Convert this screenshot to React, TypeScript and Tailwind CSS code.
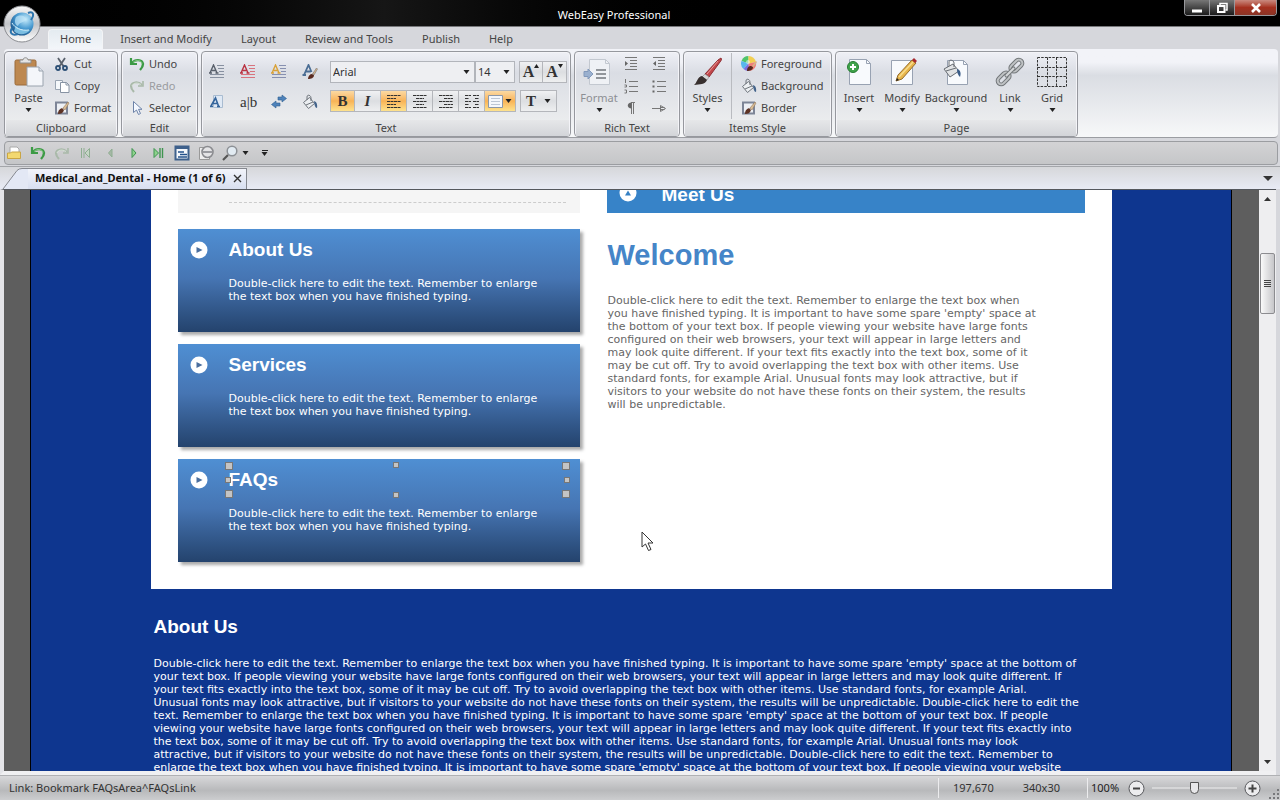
import type { ReactNode } from 'react';

const PLACEHOLDER_LINES = [
  'Double-click here to edit the text. Remember to enlarge the text box when',
  "you have finished typing. It is important to have some spare 'empty' space at",
  'the bottom of your text box. If people viewing your website have large fonts',
  'configured on their web browsers, your text will appear in large letters and',
  'may look quite different. If your text fits exactly into the text box, some of it',
  'may be cut off. Try to avoid overlapping the text box with other items. Use',
  'standard fonts, for example Arial. Unusual fonts may look attractive, but if',
  'visitors to your website do not have these fonts on their system, the results',
  'will be unpredictable.',
];

const ABOUT_LINES = [
  "Double-click here to edit the text. Remember to enlarge the text box when you have finished typing. It is important to have some spare 'empty' space at the bottom of",
  'your text box. If people viewing your website have large fonts configured on their web browsers, your text will appear in large letters and may look quite different. If',
  'your text fits exactly into the text box, some of it may be cut off. Try to avoid overlapping the text box with other items. Use standard fonts, for example Arial.',
  'Unusual fonts may look attractive, but if visitors to your website do not have these fonts on their system, the results will be unpredictable. Double-click here to edit the',
  "text. Remember to enlarge the text box when you have finished typing. It is important to have some spare 'empty' space at the bottom of your text box. If people",
  'viewing your website have large fonts configured on their web browsers, your text will appear in large letters and may look quite different. If your text fits exactly into',
  'the text box, some of it may be cut off. Try to avoid overlapping the text box with other items. Use standard fonts, for example Arial. Unusual fonts may look',
  'attractive, but if visitors to your website do not have these fonts on their system, the results will be unpredictable. Double-click here to edit the text. Remember to',
  "enlarge the text box when you have finished typing. It is important to have some spare 'empty' space at the bottom of your text box. If people viewing your website",
];

function Lines({ lines }: { lines: string[] }) {
  return (
    <>
      {lines.map((line, i) => (
        <span key={i} className="block whitespace-nowrap">
          {line}
        </span>
      ))}
    </>
  );
}

/* ---------- icons ---------- */

function Icon({ size = 16, children }: { size?: number; children: ReactNode }) {
  return (
    <svg width={size} height={size} viewBox={`0 0 ${size} ${size}`} fill="none" className="shrink-0" aria-hidden="true">
      {children}
    </svg>
  );
}

function Caret() {
  return (
    <svg width="7" height="4" viewBox="0 0 7 4" className="shrink-0" aria-hidden="true">
      <path d="M0.5 0h6L3.5 4z" fill="#222" />
    </svg>
  );
}

const PasteIcon = () => (
  <Icon size={32}>
    <rect x="2" y="4" width="21" height="25" rx="1.5" fill="#bd8850" stroke="#9a6b3b" />
    <path d="M7 7V4h3c0-3 5-3 5 0h3v3z" fill="#e4e4e4" stroke="#8d8d8d" />
    <path d="M14 11h12l4 4v15H14z" fill="#f4f6fa" stroke="#9aa3ae" />
    <path d="M26 11v4h4" fill="#dde3ec" stroke="#9aa3ae" />
  </Icon>
);
const CutIcon = () => (
  <Icon>
    <path d="M4 2l6 9M11 2L5 11" stroke="#59616c" strokeWidth="1.8" />
    <circle cx="4" cy="12" r="2" stroke="#2d5076" strokeWidth="1.8" />
    <circle cx="11" cy="12" r="2" stroke="#2d5076" strokeWidth="1.8" />
  </Icon>
);
const CopyIcon = () => (
  <Icon>
    <path d="M1.500 2.500h7v9h-7z" fill="#f5f8fb" stroke="#9aa5b3" />
    <path d="M6.500 4.500h6l2.500 2.500v7.500H6.500z" fill="#fff" stroke="#8793a3" />
    <path d="M12 4.500V7h3" stroke="#8793a3" />
  </Icon>
);
const FormatPainterIcon = () => (
  <Icon>
    <rect x="2" y="2.500" width="11" height="11" fill="#edf0f5" stroke="#7d8597" strokeWidth="2" />
    <path d="M4 14c0-4 2-5 4-6l2 2c-1 3-3 4-6 4z" fill="#5d3325" />
    <path d="M9 8l5-6 1 1-4 7z" fill="#d9bd96" stroke="#96795a" strokeWidth="0.6" />
  </Icon>
);
const UndoIcon = () => (
  <Icon>
    <path d="M2 2v6h6" stroke="#3c9a45" strokeWidth="2.200" />
    <path d="M3 7c3-4 10-4 11 1 0 3-2 5-3 6" stroke="#3c9a45" strokeWidth="2.400" />
    <path d="M4 6.500c3-3 8-3 9 1" stroke="#97d492" strokeWidth="0.8" />
  </Icon>
);
const RedoIcon = () => (
  <Icon>
    <path d="M14 3v5H9" stroke="#a9b9a9" strokeWidth="1.6" />
    <path d="M13 7C9 3 3 4 2 8c0 3 1 4 3 6" stroke="#a9b9a9" strokeWidth="2.200" />
    <path d="M12 6.500C8 4 4 5 3 8" stroke="#e3ebe3" strokeWidth="0.8" />
  </Icon>
);
const SelectorIcon = () => (
  <Icon>
    <path d="M4.500 1.500v11l3-2.500 2 4.500 2-1-2-4.200h3.500z" fill="#f4f8ff" stroke="#6d83a8" />
  </Icon>
);

function StyledTextIcon({ color, letter }: { color: string; letter: string }) {
  return (
    <Icon>
      <path d="M8 1.500h7M9 4.500h6M10 7.500h5M1 10.500h14M1 13.500h14" stroke={color} />
      <path d="M1 9L4.500 1 8 9M2.500 6.500h4M0 9h3M6.500 9h3" stroke={letter} strokeWidth="1.400" />
    </Icon>
  );
}

const BrushTextIcon = () => (
  <Icon>
    <path d="M2 11L6.500 1l3 7M3.500 7.500h5M0.500 11H4" stroke="#4a6d94" strokeWidth="1.8" />
    <path d="M6 15c0-3 2-5 4-5l2 1c0 3-3 4-6 4z" fill="#5a2a20" />
    <path d="M10.500 10l4-6 1 1-3.500 6z" fill="#d8b48a" stroke="#777" strokeWidth="0.6" />
  </Icon>
);
const TextBoxIcon = () => (
  <Icon>
    <path d="M4.500 1.500h9v12h-9z" fill="#dfe9f5" stroke="#a9bcd1" />
    <path d="M2 12L6.500 4l3 8M3.500 9.500h5M1 12.500h3M8 12.500h3" stroke="#35659c" strokeWidth="1.600" />
  </Icon>
);
const SwapIcon = () => (
  <Icon>
    <path d="M15.500 4.500L11 1v2H7v3h4v2zM0.500 10.500L5 7v2h4v3H5v2z" fill="#4e82ba" stroke="#315f91" strokeWidth="0.600" />
  </Icon>
);
const BucketIcon = () => (
  <Icon>
    <path d="M1.500 8.500l6-5 5 6-6 5z" fill="#eceff2" stroke="#6f757c" />
    <path d="M4 11l7-3M5 6V3c0-3 4-2 4 1v3" stroke="#6f757c" />
    <path d="M12 7c3 1 3.500 4 3 7-2 0-2.500-3-3-7z" fill="#44648b" />
  </Icon>
);
const RichFormatIcon = () => (
  <Icon size={32}>
    <path d="M6.500 3.500h16l4 4v21h-20z" fill="#eff1f5" stroke="#c3c8d0" />
    <path d="M22.500 3.500v4h4" stroke="#c3c8d0" />
    <path d="M13 14h10M13 18h10M13 22h10" stroke="#74787e" strokeWidth="1.600" />
    <path d="M1 15.500h4V13l5 5-5 5v-2.500H1z" fill="#9ab0cf" stroke="#8299bb" />
  </Icon>
);

function ParaIcon({ d, d2 }: { d: string; d2?: string }) {
  return (
    <Icon>
      <path d={d} stroke="#777" />
      {d2 && <path d={d2} fill="#666" />}
    </Icon>
  );
}

const StylesIcon = () => (
  <Icon size={32}>
    <path d="M29 2c1 1 0 3-1 4L17 21l-4-3L26 4z" fill="#c2474b" stroke="#8e2d33" />
    <path d="M26 5L15 18" stroke="#e99a98" />
    <path d="M13 18l4 3-2 3-5-3z" fill="#d8d8d8" stroke="#888" strokeWidth="0.6" />
    <path d="M10 20l5 4c-2 5-7 4-13 5 3-2 3-8 8-9z" fill="#38302f" />
  </Icon>
);
const ForegroundIcon = () => (
  <Icon>
    <path d="M7.500 7.500V0a7.500 7.500 0 0 0-7 5z" fill="#4fc46a" />
    <path d="M7.500 7.500V0A7.500 7.500 0 0 1 15 6z" fill="#f2cf52" />
    <path d="M7.500 7.500L.5 5a7.500 7.500 0 0 0 2 8z" fill="#58b7ee" />
    <path d="M7.500 7.500l-5 5.500a7.500 7.500 0 0 0 6 2z" fill="#7d6ee0" />
    <path d="M7.500 7.500L15 6a7.500 7.500 0 0 1-6.500 9z" fill="#ef7f7a" />
    <circle cx="7" cy="6" r="2" fill="#fff" opacity=".5" />
    <path d="M6 15c0-4 2-5 4-5l2 1c0 3-3 4-6 4z" fill="#5a2a20" />
    <path d="M11 10l4-5 1 1-3.500 5z" fill="#d8b48a" />
  </Icon>
);
const InsertIcon = () => (
  <Icon size={32}>
    <path d="M6.500 3.500h17l4 4v21h-21z" fill="#f8fafd" stroke="#98a2b2" />
    <path d="M23.500 3.500v4h4" stroke="#98a2b2" />
    <circle cx="10" cy="11" r="5.500" fill="#40a34a" stroke="#287c34" />
    <path d="M10 8v6M7 11h6" stroke="#fff" strokeWidth="2" />
  </Icon>
);
const ModifyIcon = () => (
  <Icon size={32}>
    <path d="M5.500 4.500h21v24h-21z" fill="#f8fafd" stroke="#98a2b2" />
    <path d="M10 25l2-6L26 4l4 3-14 16z" fill="#e8b64b" stroke="#946c2c" />
    <path d="M13 21L27 6" stroke="#f8dd8d" strokeWidth="1.500" />
    <path d="M26 4l2-2 3 3-2 2z" fill="#a8282e" />
    <path d="M10 25l1-3 2 2z" fill="#222" />
  </Icon>
);
const PageFillIcon = () => (
  <Icon size={32}>
    <path d="M7.500 4.500h16l4 4v20h-20z" fill="#f8fafd" stroke="#98a2b2" />
    <path d="M23.500 4.500v4h4" stroke="#98a2b2" />
    <path d="M4 13l9-5 6 7-9 6z" fill="#e1e3e5" stroke="#686d73" />
    <path d="M6 15l10-3M9 10V6c0-3 5-2 5 1v4" stroke="#686d73" />
    <path d="M17 13c4 1 4 5 3 8-2-2-3-4-3-8z" fill="#3b5d88" />
  </Icon>
);
const LinkIcon = () => (
  <Icon size={32}>
    <g transform="rotate(-45 16 16)" strokeLinecap="round">
      <rect x="0" y="12.500" width="14" height="7" rx="3.500" stroke="#74787b" strokeWidth="4" />
      <rect x="18" y="12.500" width="14" height="7" rx="3.500" stroke="#74787b" strokeWidth="4" />
      <rect x="0" y="12.500" width="14" height="7" rx="3.500" stroke="#bfc2c4" strokeWidth="2" />
      <rect x="18" y="12.500" width="14" height="7" rx="3.500" stroke="#bfc2c4" strokeWidth="2" />
      <path d="M11 16h10" stroke="#74787b" strokeWidth="4" />
      <path d="M11 16h10" stroke="#d4d6d8" strokeWidth="2" />
    </g>
  </Icon>
);
const GridIcon = () => (
  <Icon size={32}>
    <path
      d="M1.500 1.500h29v29h-29zM11.500 1.500v29M20.500 1.500v29M1.500 11.500h29M1.500 20.500h29"
      stroke="#333"
      strokeDasharray="2.500 1.200"
    />
  </Icon>
);

/* ---------- ribbon parts ---------- */

function Group({ title, className, children }: { title: string; className: string; children: ReactNode }) {
  return (
    <section
      className={`flex shrink-0 flex-col rounded-sm border border-[#96989e] bg-linear-to-b from-[#eff0f6] via-[#dadde4] via-25% to-[#f0f1f1] shadow-[inset_0_0_0_1px_#f4f4f8] ${className}`}
    >
      <div className="flex h-17 items-start">{children}</div>
      <h2 className="mx-px flex h-4 items-center justify-center bg-linear-to-b from-[#e6e7e9] to-[#d3d5d9] text-[11px] text-[#444]">
        {title}
      </h2>
    </section>
  );
}

function BigButton({ label, className, muted, children }: { label: string; className: string; muted?: boolean; children: ReactNode }) {
  return (
    <button
      type="button"
      className={`flex shrink-0 flex-col items-center pt-1 text-[11px] leading-5 ${muted ? 'text-[#8d8f94]' : 'text-[#444]'} ${className}`}
    >
      {children}
      <span>{label}</span>
      <Caret />
    </button>
  );
}

function SmallButton({ label, muted, children }: { label: string; muted?: boolean; children: ReactNode }) {
  return (
    <button type="button" className={`flex h-[22px] items-center gap-1 text-[11px] ${muted ? 'text-[#9a9ca0]' : 'text-[#444]'}`}>
      {children}
      <span>{label}</span>
    </button>
  );
}

function IconButton({ label, children }: { label: string; children: ReactNode }) {
  return (
    <button type="button" aria-label={label} className="flex h-4 w-4 items-center justify-center">
      {children}
    </button>
  );
}

function ToggleButton({ label, on, className = 'w-[26px]', children }: { label: string; on?: boolean; className?: string; children: ReactNode }) {
  return (
    <button
      type="button"
      aria-label={label}
      aria-pressed={!!on}
      className={`flex h-5 items-center justify-center gap-0.5 border-r border-[#b4b6bb] font-['Liberation_Serif',serif] text-[15px] font-bold text-[#333] last:border-r-0 ${
        on ? 'bg-linear-to-b from-[#fbd9a2] via-[#f8b356] to-[#fde28d]' : 'bg-linear-to-b from-[#f0f1f3] via-[#dcdee1] to-[#eeeff0]'
      } ${className}`}
    >
      {children}
    </button>
  );
}

const ALIGN = {
  left: 'M1 2.500h14M1 5.500h9M1 8.500h14M1 11.500h9M1 14.500h14',
  center: 'M1 2.500h14M4 5.500h8M1 8.500h14M4 11.500h8M1 14.500h14',
  right: 'M1 2.500h14M6 5.500h9M1 8.500h14M6 11.500h9M1 14.500h14',
  justify: 'M1 2.500h6M9 2.500h6M1 5.500h4M11 5.500h4M1 8.500h6M9 8.500h6M1 11.500h4M11 11.500h4M1 14.500h6M9 14.500h6',
};

function AlignIcon({ d }: { d: string }) {
  return (
    <Icon>
      <path d={d} stroke="#333" strokeDasharray="3 0.500" />
    </Icon>
  );
}

function Combo({ label, value, className }: { label: string; value: string; className: string }) {
  return (
    <div className={`flex h-[22px] items-center border border-[#b2b5bb] bg-[#eeeff2] pr-1 ${className}`}>
      <select aria-label={label} defaultValue={value} className="min-w-0 flex-1 appearance-none bg-transparent pl-0.5 text-[11px] text-[#333]">
        <option>{value}</option>
      </select>
      <Caret />
    </div>
  );
}

function TextGroup() {
  return (
    <Group title="Text" className="w-[370px]">
      <div className="mt-3 ml-[7px] grid grid-cols-4 gap-x-[15px] gap-y-[14px]">
        <IconButton label="Text style">
          <StyledTextIcon color="#8790a0" letter="#59606c" />
        </IconButton>
        <IconButton label="Red text">
          <StyledTextIcon color="#d8737d" letter="#b93342" />
        </IconButton>
        <IconButton label="Highlighted text">
          <StyledTextIcon color="#8790b0" letter="#d9a23a" />
        </IconButton>
        <IconButton label="Text brush">
          <BrushTextIcon />
        </IconButton>
        <IconButton label="Text box">
          <TextBoxIcon />
        </IconButton>
        <button type="button" className="w-4 font-['Liberation_Serif',serif] text-[15px] leading-4 text-[#333]">
          a|b
        </button>
        <IconButton label="Replace">
          <SwapIcon />
        </IconButton>
        <IconButton label="Fill">
          <BucketIcon />
        </IconButton>
      </div>
      <div className="mt-[9px] ml-[12px] flex flex-col gap-[7px]">
        <div className="flex">
          <Combo label="Font" value="Arial" className="w-[145px]" />
          <Combo label="Font size" value="14" className="w-10" />
          <div className="ml-1 flex border border-[#b4b6bb]">
            <ToggleButton label="Grow font" className="w-[23px]">
              <span className="flex items-start text-[16px] leading-4">
                A<svg width="5" height="4" viewBox="0 0 5 4" aria-hidden="true"><path d="M0 4h5L2.500 0z" fill="#222" /></svg>
              </span>
            </ToggleButton>
            <ToggleButton label="Shrink font" className="w-[23px]">
              <span className="flex items-start text-[16px] leading-4">
                A<svg width="5" height="4" viewBox="0 0 5 4" aria-hidden="true"><path d="M0 0h5L2.500 4z" fill="#222" /></svg>
              </span>
            </ToggleButton>
          </div>
        </div>
        <div className="flex">
          <div className="flex border border-[#b4b6bb]">
            <ToggleButton label="Bold" on className="w-6">
              B
            </ToggleButton>
            <ToggleButton label="Italic">
              <i>I</i>
            </ToggleButton>
            <ToggleButton label="Align left" on>
              <AlignIcon d={ALIGN.left} />
            </ToggleButton>
            <ToggleButton label="Align center">
              <AlignIcon d={ALIGN.center} />
            </ToggleButton>
            <ToggleButton label="Align right">
              <AlignIcon d={ALIGN.right} />
            </ToggleButton>
            <ToggleButton label="Justify">
              <AlignIcon d={ALIGN.justify} />
            </ToggleButton>
            <ToggleButton label="Vertical alignment" on className="w-[30px]">
              <Icon size={15}>
                <path d="M.5 1.500h14v12H.5z" fill="#f4f7fb" stroke="#8b97a8" />
                <path d="M3 4.500h9M3 7.500h9M3 10.500h9" stroke="#bcc6d4" />
              </Icon>
              <Caret />
            </ToggleButton>
          </div>
          <div className="ml-1 flex border border-[#b4b6bb]">
            <ToggleButton label="Text effects" className="w-[35px] gap-2">
              T
              <Caret />
            </ToggleButton>
          </div>
        </div>
      </div>
    </Group>
  );
}

function Ribbon() {
  return (
    <div className="mr-0.5 ml-1 flex shrink-0 gap-[3px] overflow-hidden rounded-sm border-b border-[#9b9da2] bg-linear-to-b from-[#f2f3f8] from-15% via-[#dadde3] via-30% to-[#f7f8f9] pt-0.5">
      <Group title="Clipboard" className="w-[114px]">
        <BigButton label="Paste" className="w-[47px]">
          <PasteIcon />
        </BigButton>
        <div className="ml-0.5 flex flex-col pt-px">
          <SmallButton label="Cut">
            <CutIcon />
          </SmallButton>
          <SmallButton label="Copy">
            <CopyIcon />
          </SmallButton>
          <SmallButton label="Format">
            <FormatPainterIcon />
          </SmallButton>
        </div>
      </Group>

      <Group title="Edit" className="w-[77px]">
        <div className="ml-[7px] flex flex-col pt-px">
          <SmallButton label="Undo">
            <UndoIcon />
          </SmallButton>
          <SmallButton label="Redo" muted>
            <RedoIcon />
          </SmallButton>
          <SmallButton label="Selector">
            <SelectorIcon />
          </SmallButton>
        </div>
      </Group>

      <TextGroup />

      <Group title="Rich Text" className="w-[106px]">
        <BigButton label="Format" muted className="w-[48px]">
          <RichFormatIcon />
        </BigButton>
        <div className="mt-1 grid grid-cols-2 gap-x-3 gap-y-[6px]">
          <IconButton label="Indent">
            <ParaIcon d="M2 1.500h12M7 4.500h7M7 7.500h7M7 10.500h7M2 13.500h12" d2="M2 5l3 2.500L2 10z" />
          </IconButton>
          <IconButton label="Outdent">
            <ParaIcon d="M2 1.500h12M7 4.500h7M7 7.500h7M7 10.500h7M2 13.500h12" d2="M5 5L2 7.500 5 10z" />
          </IconButton>
          <IconButton label="Numbered list">
            <ParaIcon d="M6 3.500h9M6 8.500h9M6 13.500h9M2.500 1v4M1.500 7h2v2h-2M1.500 12h2v3h-2" />
          </IconButton>
          <IconButton label="Bulleted list">
            <ParaIcon d="M6 3.500h9M6 8.500h9M6 13.500h9" d2="M1.500 2.500h2v2h-2zM1.500 7.500h2v2h-2zM1.500 12.500h2v2h-2z" />
          </IconButton>
          <IconButton label="Paragraph marks">
            <ParaIcon d="M8.500 3v11M10.500 3v11M8 2.500h4" d2="M8.500 2.500v6c-5 0-5-6 0-6z" />
          </IconButton>
          <IconButton label="Tab stop">
            <ParaIcon d="M1 8.500h8M9.500 5.500v6M9.500 5.500l5 3-5 3M9.500 7.500h4M9.500 9.500h4" />
          </IconButton>
        </div>
      </Group>

      <Group title="Items Style" className="w-[149px]">
        <BigButton label="Styles" className="w-[47px]">
          <StylesIcon />
        </BigButton>
        <div className="mt-px flex flex-col border-l border-[#b9bbc0] pl-[9px]">
          <SmallButton label="Foreground">
            <ForegroundIcon />
          </SmallButton>
          <SmallButton label="Background">
            <BucketIcon />
          </SmallButton>
          <SmallButton label="Border">
            <FormatPainterIcon />
          </SmallButton>
        </div>
      </Group>

      <Group title="Page" className="w-[243px]">
        <BigButton label="Insert" className="w-[46px]">
          <InsertIcon />
        </BigButton>
        <BigButton label="Modify" className="w-10">
          <ModifyIcon />
        </BigButton>
        <BigButton label="Background" className="w-[68px]">
          <PageFillIcon />
        </BigButton>
        <BigButton label="Link" className="w-10">
          <LinkIcon />
        </BigButton>
        <BigButton label="Grid" className="w-11">
          <GridIcon />
        </BigButton>
      </Group>
    </div>
  );
}

/* ---------- window chrome ---------- */

function TitleBar() {
  return (
    <header className="relative flex h-[27px] shrink-0 items-start border-b border-[#77787b] bg-linear-to-r from-black via-[#161616] via-30% to-black to-60%">
      <h1 className="absolute inset-x-0 top-[5px] text-center text-[11px] leading-5 text-white">
        <span className="mr-[52px]">WebEasy Professional</span>
      </h1>
      <div className="relative mr-[3px] ml-auto flex h-4 overflow-hidden rounded-b border border-t-0 border-[#97989c]">
        <button type="button" aria-label="Minimize" className="flex w-[25px] items-center justify-center border-r border-[#97989c] bg-linear-to-b from-[#777] to-[#1c1c1c]">
          <svg width="12" height="12" viewBox="0 0 12 12"><path d="M1 7.500h10v3H1z" fill="#fff" /></svg>
        </button>
        <button type="button" aria-label="Restore" className="flex w-[25px] items-center justify-center border-r border-[#97989c] bg-linear-to-b from-[#777] to-[#1c1c1c]">
          <svg width="12" height="12" viewBox="0 0 12 12" fill="none">
            <path d="M4 3V1.500h7V8H9.500" stroke="#fff" strokeWidth="1.500" />
            <path d="M2 4h6.500v6H2z" stroke="#fff" strokeWidth="2" />
          </svg>
        </button>
        <button type="button" aria-label="Close" className="flex w-[41px] items-center justify-center bg-linear-to-b from-[#c9897f] via-[#a5301f] to-[#8a3526]">
          <svg width="12" height="12" viewBox="0 0 12 12"><path d="M2 2l8 8M10 2l-8 8" stroke="#fff" strokeWidth="2.600" /></svg>
        </button>
      </div>
      {/* application button hangs over the menu row */}
      <button type="button" aria-label="Application menu" className="absolute top-[5px] left-[3px] z-10">
        <svg width="38" height="38" viewBox="0 0 38 38" fill="none">
          <defs>
            <radialGradient id="globe" cx="0.65" cy="0.3" r="0.8">
              <stop offset="0" stopColor="#c8ecfb" />
              <stop offset="0.5" stopColor="#4a9cd2" />
              <stop offset="1" stopColor="#134a80" />
            </radialGradient>
            <linearGradient id="rim" x1="0" y1="0" x2="0" y2="1">
              <stop offset="0" stopColor="#f8f8f8" />
              <stop offset="0.5" stopColor="#c2c4c8" />
              <stop offset="1" stopColor="#fff" />
            </linearGradient>
          </defs>
          <circle cx="19" cy="19" r="18" fill="url(#rim)" stroke="#8a8c91" />
          <circle cx="19" cy="19" r="11.500" fill="url(#globe)" />
          <path d="M13 12c5-3 9-1 10 2-2 4-7 3-8 7-3-1-4-5-2-9z" fill="#bfe4f6" opacity=".7" />
          <path d="M11 26c3 4 11 5 16-1-5 1-10 0-14-4z" fill="#8fd0ee" opacity=".8" />
          <path d="M25 8c5-2 7 1 3 7M9 23c-3 5 0 8 6 6" stroke="#2c74ad" strokeWidth="2" />
          <path d="M9 18c3 5 9 8 17 7" stroke="#d5f0fb" />
        </svg>
      </button>
    </header>
  );
}

const MENU = ['Home', 'Insert and Modify', 'Layout', 'Review and Tools', 'Publish', 'Help'];

function MenuTabs() {
  return (
    <nav className="flex h-[22px] shrink-0 items-end gap-[5px] pl-12">
      {MENU.map((item, i) => (
        <button
          key={item}
          type="button"
          className={`h-5 rounded-t-sm border border-b-0 px-[11px] text-[11px] text-[#444] ${
            i === 0 ? 'border-[#f3f4f6] bg-linear-to-b from-[#e4ebf0] to-[#f3f6fa]' : 'border-transparent'
          }`}
        >
          {item}
        </button>
      ))}
    </nav>
  );
}

function QuickBar() {
  return (
    <div className="mr-0.5 ml-1 mt-[3px] flex h-6 shrink-0 items-center gap-2 rounded-sm border border-[#9b9da1] bg-linear-to-b from-[#d3d3d5] to-[#c5c6c8] pl-px">
      <IconButton label="Open">
        <Icon>
          <path d="M4 2h7l2 2v6H4z" fill="#fff" stroke="#aaa" />
          <path d="M1.500 8h3l1-1h9v6.500h-13z" fill="#f3d871" stroke="#c9a545" />
        </Icon>
      </IconButton>
      <IconButton label="Undo">
        <UndoIcon />
      </IconButton>
      <IconButton label="Redo">
        <RedoIcon />
      </IconButton>
      <IconButton label="First page">
        <Icon>
          <path d="M3.500 3v10M6 3v10" stroke="#8fae92" />
          <path d="M11.500 3.500v9L7 8z" fill="#c5d5c5" stroke="#8fae92" />
        </Icon>
      </IconButton>
      <IconButton label="Previous page">
        <Icon>
          <path d="M10 4v8L6.500 8z" fill="#a5b8a5" stroke="#8fae92" />
        </Icon>
      </IconButton>
      <IconButton label="Next page">
        <Icon>
          <path d="M6 3.500v9l4-4.500z" fill="#8ed28c" stroke="#3f9450" />
        </Icon>
      </IconButton>
      <IconButton label="Last page">
        <Icon>
          <path d="M4 3.500v9L8.500 8z" fill="#8ed28c" stroke="#3f9450" />
          <path d="M10 3v10M12.500 3v10" stroke="#3f9450" strokeWidth="1.400" />
        </Icon>
      </IconButton>
      <IconButton label="Page list">
        <Icon>
          <path d="M1.500 1.500h13v13h-13z" fill="#f5f8fc" stroke="#3f618c" strokeWidth="2" />
          <path d="M1 3h14" stroke="#3f618c" strokeWidth="2" />
          <path d="M4 7h6M6 9.500h7M4 12h9" stroke="#24528b" strokeWidth="1.300" />
        </Icon>
      </IconButton>
      <IconButton label="Preview">
        <Icon>
          <path d="M1.500 2.500h10v12h-10z" fill="#eee" stroke="#999" />
          <circle cx="9.500" cy="7" r="5.500" fill="#e4e4e6" stroke="#8b8c90" strokeWidth="1.600" />
          <path d="M5 7h9" stroke="#9a9ba0" strokeWidth="2" />
        </Icon>
      </IconButton>
      <IconButton label="Zoom">
        <Icon>
          <path d="M1 15l5-5" stroke="#555" strokeWidth="2.200" />
          <circle cx="10" cy="6" r="4.800" fill="#e2ebf2" stroke="#8d9196" strokeWidth="1.500" />
        </Icon>
      </IconButton>
      <button type="button" aria-label="Zoom options" className="-ml-1">
        <Caret />
      </button>
      <button type="button" aria-label="Customize toolbar" className="ml-1 flex flex-col items-center gap-px">
        <span className="h-px w-1.5 bg-[#222]" />
        <Caret />
      </button>
    </div>
  );
}

function DocumentTabs() {
  return (
    <div className="mt-px flex h-[23px] shrink-0 items-end border-t border-[#a4a6aa] bg-linear-to-b from-[#d6d7da] to-[#e8ebf5] pr-[7px]">
      <svg width="28" height="21" viewBox="0 0 28 21" fill="none" className="shrink-0" aria-hidden="true">
        <path d="M3 21L17 2.500Q19 .5 22 .5h6V21z" fill="#e3e8f5" />
        <path d="M3 21L17 2.500Q19 .5 22 .5h6" stroke="#85888f" />
      </svg>
      <div className="flex h-[21px] items-center gap-2 border-t border-r border-[#85888f] bg-linear-to-b from-[#f2f4fa] to-[#d8dff0] pr-1 pb-0.5 pl-[7px]">
        <span className="text-[11px] font-bold whitespace-nowrap text-[#111]">Medical_and_Dental - Home (1 of 6)</span>
        <button type="button" aria-label="Close document">
          <svg width="9" height="9" viewBox="0 0 9 9" className="block">
            <path d="M1 1l7 7M8 1L1 8" stroke="#333" strokeWidth="1.400" />
          </svg>
        </button>
      </div>
      <button type="button" aria-label="Document list" className="mb-2 ml-auto">
        <svg width="10" height="5" viewBox="0 0 10 5" className="block">
          <path d="M0 0h10L5 5z" fill="#333" />
        </svg>
      </button>
    </div>
  );
}

/* ---------- edited page ---------- */

function Disc({ up }: { up?: boolean }) {
  return (
    <svg width="18" height="18" viewBox="0 0 18 18" className="shrink-0" aria-hidden="true">
      <circle cx="9" cy="9" r="8.500" fill="#fff" />
      <path d={up ? 'M6 11.500h6L9 6.500z' : 'M6.500 6v6l6-3z'} fill={up ? '#3580c4' : '#4a6e9e'} />
    </svg>
  );
}

const HANDLES = [
  '-left-1 -top-1 h-2 w-2',
  'left-1/2 -ml-1 -top-1 h-1.5 w-1.5',
  '-right-1 -top-1 h-2 w-2',
  '-left-1 top-[11px] h-1.5 w-1.5',
  '-right-1 top-[11px] h-1.5 w-1.5',
  '-left-1 -bottom-1 h-2 w-2',
  'left-1/2 -ml-1 -bottom-1 h-1.5 w-1.5',
  '-right-1 -bottom-1 h-2 w-2',
];

function Card({ title, selected }: { title: string; selected?: boolean }) {
  return (
    <article className="flex h-[103px] gap-[21px] bg-linear-to-b from-[#4f8fd3] via-[#4675b3] via-48% to-[#24436d] pr-[14px] pl-3 text-white shadow-[3px_3px_3px_#aaa]">
      <div className="mt-3">
        <Disc />
      </div>
      <div className="min-w-0 flex-1 pt-[7px]">
        <h3 className="relative h-7 font-['Liberation_Sans',sans-serif] text-[19px] leading-7 font-bold">
          {title}
          {selected &&
            HANDLES.map((pos) => <span key={pos} className={`absolute border border-[#777] bg-[#c4c4c4] ${pos}`} />)}
        </h3>
        <p className="mt-[13px] text-[11px] leading-[13px]">
          <Lines lines={['Double-click here to edit the text. Remember to enlarge', 'the text box when you have finished typing.']} />
        </p>
      </div>
    </article>
  );
}

function Canvas() {
  return (
    <main className="min-w-0 flex-1 overflow-hidden bg-[#5e5e5e] pr-[27px] pl-[26px]">
      <div className="min-h-full border-x border-black bg-[#0e368f] font-['DejaVu_Sans',Verdana,sans-serif]">
        <div className="mx-auto w-[961px]">
          <div className="relative flex gap-[27px] bg-white pr-[27px] pb-[27px] pl-[27px]">
            <div className="flex w-[402px] flex-col gap-3">
              <div className="mb-1 h-[23px] bg-[#f5f5f5] pt-3 pr-[14px] pl-[51px]">
                <div className="border-t border-dashed border-[#ccc]" />
              </div>
              <Card title="About Us" />
              <Card title="Services" />
              <Card title="FAQs" selected />
            </div>
            <div className="min-w-0 flex-1">
              <div className="flex h-[23px] items-end gap-[25px] overflow-hidden bg-[#3783c8] pl-3 font-['Liberation_Sans',sans-serif] text-[19px] leading-7 font-bold text-white">
                <div className="mb-[11px]">
                  <Disc up />
                </div>
                <h3 className="mb-1">Meet Us</h3>
              </div>
              <h2 className="mt-6 pl-px font-['Liberation_Sans',sans-serif] text-[29px] leading-9 font-bold text-[#4585c8]">Welcome</h2>
              <p className="mt-[21px] pl-px text-[11px] leading-[13px] text-[#666]">
                <Lines lines={PLACEHOLDER_LINES} />
              </p>
            </div>
            {/* mouse pointer */}
            <svg width="14" height="21" viewBox="0 0 14 21" className="absolute bottom-[37px] left-[490px]" aria-hidden="true">
              <path d="M1 1v15l3.500-3 3 6.500 2.500-1-3-6.500H12z" fill="#fff" stroke="#333" />
            </svg>
          </div>
          <div className="pl-[3px] text-white">
            <h3 className="mt-6 font-['Liberation_Sans',sans-serif] text-[19px] leading-7 font-bold">About Us</h3>
            <p className="mt-4 text-[11px] leading-[13px]">
              <Lines lines={ABOUT_LINES} />
            </p>
          </div>
        </div>
      </div>
    </main>
  );
}

function ScrollBar() {
  return (
    <div className="flex w-[17px] shrink-0 flex-col items-center justify-between bg-[#eeeef0] py-[7px]">
      <div className="flex flex-col items-center gap-[52px]">
        <button type="button" aria-label="Scroll up">
          <svg width="7" height="4" viewBox="0 0 7 4" className="block"><path d="M0 4h7L3.500 0z" fill="#333" /></svg>
        </button>
        <div className="flex h-[61px] w-[15px] flex-col items-center justify-center gap-px rounded-xs border border-[#8c8c90] bg-linear-to-r from-[#fafafa] to-[#c6c6c9]">
          <span className="h-px w-[7px] bg-[#444]" />
          <span className="h-px w-[7px] bg-[#444]" />
          <span className="h-px w-[7px] bg-[#444]" />
          <span className="h-px w-[7px] bg-[#444]" />
        </div>
      </div>
      <button type="button" aria-label="Scroll down">
        <svg width="7" height="4" viewBox="0 0 7 4" className="block"><path d="M0 0h7L3.500 4z" fill="#333" /></svg>
      </button>
    </div>
  );
}

function ZoomButton({ label, d }: { label: string; d: string }) {
  return (
    <button type="button" aria-label={label}>
      <svg width="17" height="17" viewBox="0 0 17 17" fill="none" className="block">
        <circle cx="8.500" cy="8.500" r="7.500" fill="#ececee" stroke="#58595d" />
        <path d={d} stroke="#444" strokeWidth="2" />
      </svg>
    </button>
  );
}

function StatusBar() {
  return (
    <footer className="flex h-[25px] shrink-0 items-center border-t border-[#b0b1b4] bg-linear-to-b from-[#d8d8da] via-[#b8b9bb] via-60% to-[#cccdcf] text-[11px] text-[#333]">
      <span className="pl-[9px]">Link: Bookmark FAQsArea^FAQsLink</span>
      <div className="ml-auto flex h-5 w-[150px] items-center gap-[29px] border-x border-[#ececee] pl-[14px]">
        <span>197,670</span>
        <span>340x30</span>
      </div>
      <label htmlFor="zoom" className="w-10 pl-[3px] text-[#222]">
        100%
      </label>
      <ZoomButton label="Zoom out" d="M5 8.500h7" />
      <input
        id="zoom"
        type="range"
        defaultValue="50"
        className="mx-[7px] h-4 w-[85px] appearance-none bg-linear-to-b from-transparent from-45% via-white via-50% to-transparent to-55% [&::-webkit-slider-thumb]:h-3 [&::-webkit-slider-thumb]:w-[9px] [&::-webkit-slider-thumb]:appearance-none [&::-webkit-slider-thumb]:rounded-b-full [&::-webkit-slider-thumb]:border [&::-webkit-slider-thumb]:border-[#555] [&::-webkit-slider-thumb]:bg-[#e8e8ea]"
      />
      <ZoomButton label="Zoom in" d="M4.500 8.500h8M8.500 4.500v8" />
      <svg width="12" height="12" viewBox="0 0 12 12" className="mt-auto ml-[7px]" aria-hidden="true">
        <path d="M9 1h2v2H9zM5 5h2v2H5zM9 5h2v2H9zM1 9h2v2H1zM5 9h2v2H5zM9 9h2v2H9z" fill="#77787b" />
      </svg>
    </footer>
  );
}

export default function App() {
  return (
    <div className="flex h-screen flex-col overflow-hidden bg-[#d6d7dc] font-['Noto_Sans','Open_Sans',sans-serif]">
      <TitleBar />
      <MenuTabs />
      <Ribbon />
      <QuickBar />
      <DocumentTabs />
      <div className="mr-1 flex min-h-0 flex-1 border-t border-b-4 border-l-4 border-t-[#55585e] border-b-[#f0f0f2] border-l-[#e4e4e8]">
        <Canvas />
        <ScrollBar />
      </div>
      <StatusBar />
    </div>
  );
}
